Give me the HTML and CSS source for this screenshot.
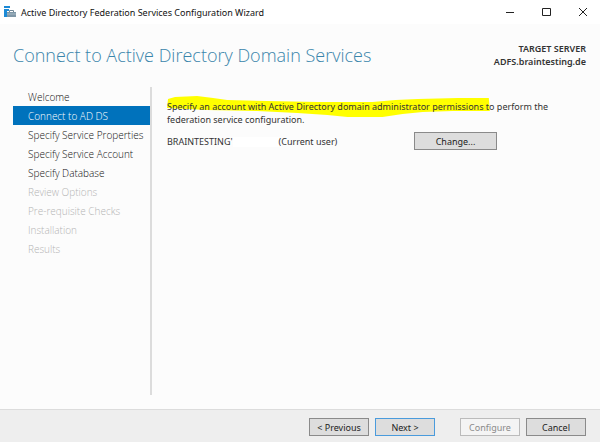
FILE: index.html
```html
<!DOCTYPE html>
<html lang="en">
<head>
    <meta charset="UTF-8">
    <meta name="viewport" content="width=device-width, initial-scale=1">
    <title>Active Directory Federation Services Configuration Wizard</title>
    <link rel="stylesheet" href="styles.css">
</head>
<body>

    <div class="title-bar">
        <svg class="app-icon" width="12" height="12" viewBox="0 0 12 12" aria-hidden="true">
            <path d="M0 0h6v2H0z" fill="#1c8ad6"/>
            <path d="M0 3h5v2H3v6H0z" fill="#1c8ad6"/>
            <path d="M5.500 6V4.500h4V6" fill="none" stroke="#6f8797"/>
            <path d="M3 6h9v5H3z" fill="#7f97a7"/>
            <path d="M3 8h9" stroke="#a9bac5"/>
        </svg>
        <span class="title">Active Directory Federation Services Configuration Wizard</span>
        <div class="window-buttons">
            <button type="button" aria-label="Minimize">
                <svg width="10" height="10" viewBox="0 0 10 10"><path d="M1 5.500h8" stroke="#222"/></svg>
            </button>
            <button type="button" aria-label="Maximize">
                <svg width="10" height="10" viewBox="0 0 10 10"><path d="M1.500 1.500h8v7h-8z" fill="none" stroke="#222"/></svg>
            </button>
            <button type="button" aria-label="Close">
                <svg width="10" height="10" viewBox="0 0 10 10"><path d="M2 1l8 8M10 1l-8 8" stroke="#222"/></svg>
            </button>
        </div>
    </div>

    <header class="header">
        <h1>Connect to Active Directory Domain Services</h1>
        <div class="target">
            <div>TARGET SERVER</div>
            <div>ADFS.braintesting.de</div>
        </div>
    </header>

    <div class="content">
        <nav class="steps">
            <a href="#">Welcome</a>
            <a href="#" class="active" aria-current="step">Connect to AD DS</a>
            <a href="#">Specify Service Properties</a>
            <a href="#">Specify Service Account</a>
            <a href="#">Specify Database</a>
            <a href="#" class="disabled" aria-disabled="true">Review Options</a>
            <a href="#" class="disabled" aria-disabled="true">Pre-requisite Checks</a>
            <a href="#" class="disabled" aria-disabled="true">Installation</a>
            <a href="#" class="disabled" aria-disabled="true">Results</a>
        </nav>

        <main class="page">
            <p class="intro">
                <span class="marked">
                    <svg class="marker" viewBox="0 0 322 22" preserveAspectRatio="none" aria-hidden="true">
                        <path d="M1 3L8 1 30 0 46 2 60 4 100 5 150 6 205 6 228 4 250 3 290 2 321 2 322 15 285 15 255 16 235 18 215 21 180 21 160 19 130 17 90 15 40 14 0 12z" fill="#ff0"/>
                    </svg>
                    <span class="marked-text">Specify an account with Active Directory domain administrator permissions</span>
                </span>
                <span class="marked-text">to perform the</span><br>federation service configuration.
            </p>
            <div class="account">
                <span class="user">BRAINTESTING'<span class="blank"></span>(Current user)</span>
                <button type="button" class="btn change">Change...</button>
            </div>
        </main>
    </div>

    <footer class="footer">
        <button type="button" class="btn">&lt; Previous</button>
        <button type="button" class="btn next">Next &gt;</button>
        <button type="button" class="btn configure" disabled>Configure</button>
        <button type="button" class="btn">Cancel</button>
    </footer>

</body>
</html>
```
FILE: styles.css
```css
* {
    box-sizing: border-box;
}

body {
    margin: 0;
    min-height: 100vh;
    display: flex;
    flex-direction: column;
    background-color: #fcfcfc;
    color: #333;
    font-family: "Noto Sans", "Open Sans", sans-serif;
    font-size: 9px;
    line-height: 13px;
}

/* Title bar */
.title-bar {
    display: flex;
    align-items: center;
    height: 24px;
    padding: 0 0 0 4px;
    background-color: #fff;
    color: #111;
}

.app-icon {
    margin-right: 5px;
}

.window-buttons {
    display: flex;
    margin-left: auto;
}

.window-buttons button {
    display: flex;
    align-items: center;
    justify-content: center;
    width: 36px;
    height: 22px;
    padding: 0;
    border: none;
    background: none;
}

/* Page heading */
.header {
    display: flex;
    justify-content: space-between;
    padding: 18px 14px 0 13px;
}

h1 {
    margin: 0;
    color: #3a85ab;
    font-family: "Open Sans", sans-serif;
    font-size: 18px;
    font-weight: 300;
    line-height: 27px;
}

.target {
    font-weight: 600;
    text-align: right;
}

/* Steps and page */
.content {
    flex: 1;
    display: flex;
    padding: 18px 13px 14px;
}

.steps {
    flex: none;
    width: 139px;
    border-right: 2px solid #dcdcdc;
    font-family: "Open Sans", sans-serif;
    font-size: 10px;
    font-weight: 300;
}

.steps a {
    display: block;
    padding: 2px 0 0 15px;
    color: #111;
    line-height: 17px;
    text-decoration: none;
    white-space: nowrap;
}

.steps a.active {
    background-color: #0072bc;
    color: #fff;
}

.steps a.disabled {
    color: #b4b4b4;
}

.page {
    flex: 1;
    padding: 13px 0 0 15px;
}

.intro {
    margin: 0;
}

.marked {
    position: relative;
}

/* Highlighter stroke behind the sentence, running a little past its end */
.marker {
    position: absolute;
    top: -4px;
    left: 0;
    width: calc(100% + 4px);
    height: 22px;
}

.marked-text {
    position: relative;
}

.account {
    display: flex;
    align-items: center;
    margin-top: 6px;
}

.user {
    width: 247px;
}

.blank {
    display: inline-block;
    width: 46px;
    height: 10px;
    background-color: #fff;
    vertical-align: middle;
}

/* Buttons */
.btn {
    width: 60px;
    height: 18px;
    padding: 0;
    border: 1px solid #8a8a8a;
    background-color: #ddd;
    color: #222;
    font: inherit;
}

.change {
    width: 83px;
}

.next {
    border-color: #4a9bdc;
}

.configure {
    margin-left: 19px;
    border-color: #bbb;
    background-color: #f4f4f4;
    color: #8a8a8a;
}

.footer {
    display: flex;
    justify-content: flex-end;
    gap: 6px;
    padding: 8px 14px 6px;
    border-top: 1px solid #dcdcdc;
    background-color: #eee;
}
```
